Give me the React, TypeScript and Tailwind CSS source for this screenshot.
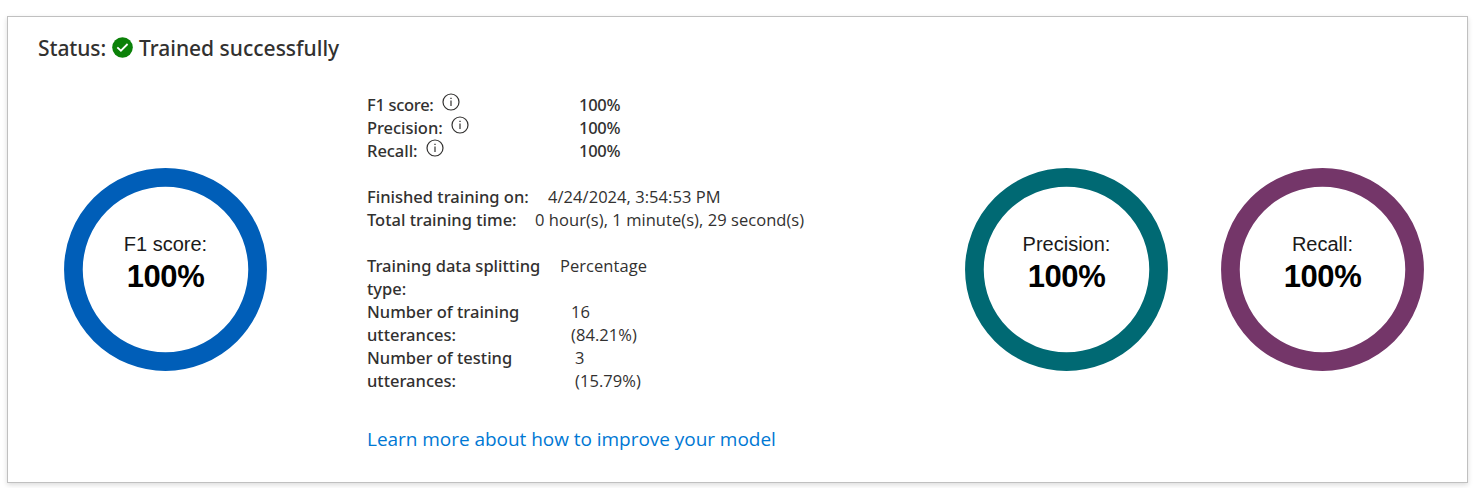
import type { ReactNode } from "react";

function CheckBadge() {
  return (
    <svg viewBox="0 0 21 21" className="-mt-[2px] h-[21px] w-[21px] shrink-0" aria-hidden="true">
      <circle cx="10.5" cy="10.5" r="10.3" fill="#0b8108" />
      <path d="M5.3 10.3 L8.9 13.7 L15.6 7" fill="none" stroke="#fff" strokeWidth="1.8" />
    </svg>
  );
}

function InfoIcon() {
  return (
    <svg viewBox="0 0 18 18" className="h-[18px] w-[18px] shrink-0" aria-hidden="true">
      <circle cx="9" cy="9" r="8" fill="none" stroke="#323130" strokeWidth="1.2" />
      <path d="M9 7.4 V13" stroke="#323130" strokeWidth="1.2" />
      <path d="M9 4.8 V6.1" stroke="#323130" strokeWidth="1.3" />
    </svg>
  );
}

function Ring({ label, color }: { label: string; color: string }) {
  return (
    <div className="grid h-[203px] w-[203px] shrink-0">
      <svg viewBox="0 0 203 203" className="col-start-1 row-start-1 h-[203px] w-[203px]" aria-hidden="true">
        <circle cx="101.5" cy="101.5" r="92.1" fill="none" strokeWidth="18.7" className={color} />
      </svg>
      <div className="col-start-1 row-start-1 flex flex-col items-center pt-[64px] font-['Liberation_Sans',Arial,sans-serif]">
        <span className="text-[20px] leading-[24px] text-[#1a1a1a]">{label}</span>
        <span className="text-[31px] leading-[41px] font-bold tracking-[-0.4px] text-black">100%</span>
      </div>
    </div>
  );
}

function Metric({ label, tracking }: { label: string; tracking: string }) {
  return (
    <div className="flex h-[23px]">
      <div className="flex w-[212px] gap-[8px]">
        <span className={`font-medium ${tracking}`}>{label}</span>
        <span>
          <InfoIcon />
        </span>
      </div>
      <span className="font-medium tracking-[-0.3px]">100%</span>
    </div>
  );
}

function Field({ label, width, children }: { label: ReactNode; width: string; children: ReactNode }) {
  return (
    <div className="flex">
      <div className={`shrink-0 font-medium ${width}`}>{label}</div>
      <div className="font-['Open_Sans',sans-serif] tracking-[0.05px]">{children}</div>
    </div>
  );
}

export default function App() {
  return (
    <div className="h-[488px] w-[1478px] bg-white pt-[16px] pl-[7px] font-['Noto_Sans',sans-serif] text-[#323130]">
      <main className="h-[467px] w-[1461px] border border-[#c0c0c0] pt-[18px] pl-[30px] shadow-[0_2px_5px_rgba(0,0,0,0.14)]">
        <h1 className="flex h-[26px] items-center text-[21px] leading-[26px] font-medium whitespace-nowrap">
          <span className="w-[74px] tracking-[-0.1px]">Status:</span>
          <CheckBadge />
          <span className="ml-[6px]">Trained successfully</span>
        </h1>

        <div className="flex pt-[32px]">
          <div className="ml-[26px] w-[303px] shrink-0 pt-[75px]">
            <Ring label="F1 score:" color="stroke-[#005eb8]" />
          </div>

          <section className="w-[598px] shrink-0 text-[16.5px] leading-[23px] whitespace-nowrap">
            <Metric label="F1 score:" tracking="tracking-[-0.3px]" />
            <Metric label="Precision:" tracking="tracking-[-0.05px]" />
            <Metric label="Recall:" tracking="tracking-[-0.05px]" />

            <div className="pt-[23px]">
              <Field label="Finished training on:" width="w-[181px]">
                4/24/2024, 3:54:53 PM
              </Field>
              <Field label="Total training time:" width="w-[168px]">
                0 hour(s), 1 minute(s), 29 second(s)
              </Field>
            </div>

            <div className="pt-[23px]">
              <Field label={<>Training data splitting<br />type:</>} width="w-[193px]">
                Percentage
              </Field>
              <Field label={<>Number of training<br />utterances:</>} width="w-[204px]">
                16<br />(84.21%)
              </Field>
              <Field label={<>Number of testing<br />utterances:</>} width="w-[208px]">
                3<br />(15.79%)
              </Field>
            </div>

            <a href="#improve" className="mt-[34px] block font-['Open_Sans',sans-serif] text-[19px] leading-[26px] tracking-[-0.04px] text-[#0078d4]">
              Learn more about how to improve your model
            </a>
          </section>

          <div className="flex gap-[53px] pt-[75px]">
            <Ring label="Precision:" color="stroke-[#006973]" />
            <Ring label="Recall:" color="stroke-[#743669]" />
          </div>
        </div>
      </main>
    </div>
  );
}
